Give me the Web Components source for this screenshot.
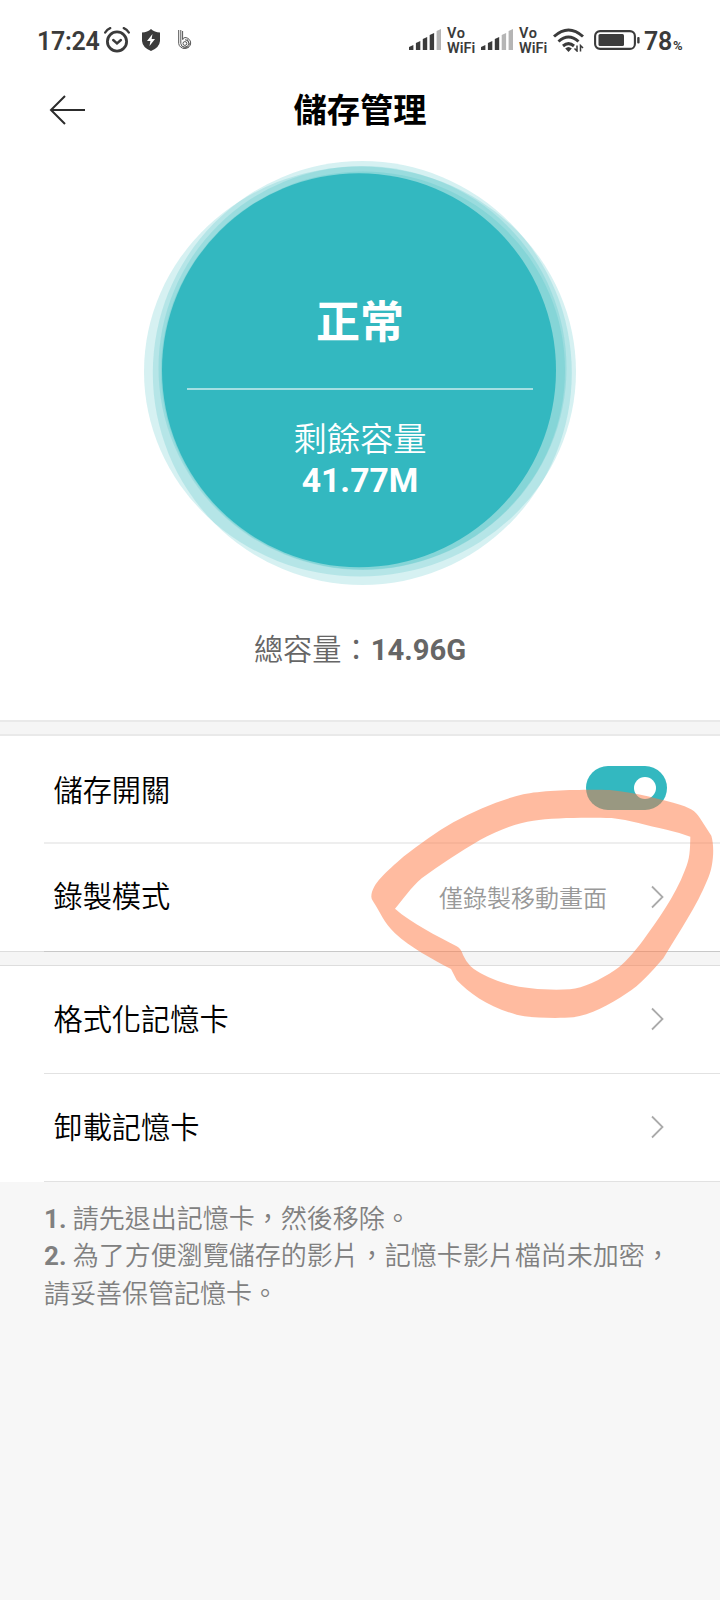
<!DOCTYPE html>
<html lang="zh-Hant">
<head>
<meta charset="utf-8">
<title>儲存管理</title>
<style>
html,body{margin:0;padding:0;background:#f7f7f7}
body{font-family:Roboto,"Noto Sans CJK TC",sans-serif;color:#000}
</style>
</head>
<body>
<storage-page></storage-page>
<script>
const define = (name, html) => customElements.define(name, class extends HTMLElement {
  constructor() {
    super();
    const t = document.createElement('template');
    t.innerHTML = html;
    this.attachShadow({ mode: 'open' }).appendChild(t.content.cloneNode(true));
  }
});

customElements.define('signal-bars', class extends HTMLElement {
  connectedCallback() {
    const level = +this.getAttribute('level');
    const root = this.attachShadow({ mode: 'open' });
    let bars = '';
    for (let i = 0; i < 5; i++) {
      const x = i * 6.9, top = 16 - i * 4;
      bars += `<path d="M${x} ${top + 2}L${x + 4.4} ${top}V21H${x}Z" fill="${i < level ? '#3b3b3b' : '#b5b5b5'}"/>`;
    }
    root.innerHTML = `<style>:host{display:block;width:32px;height:21px}svg{display:block}</style><svg width="32" height="21">${bars}</svg>`;
  }
});

define('vo-wifi', `<style>
:host{display:block;width:30px;font:600 14.500px/15px Roboto,sans-serif;color:#3b3b3b}
div{white-space:nowrap;height:15px}.v{letter-spacing:.6px}
</style><div class="v">Vo</div><div>WiFi</div>`);

define('status-bar', `<style>
:host{display:flex;height:80px;box-sizing:border-box;padding:0 0 0 37px;align-items:flex-start;color:#3b3b3b}
svg{display:block;flex:none}
.time{font:600 25px/30px Roboto,sans-serif;width:67px;margin-top:27px;letter-spacing:-.3px}
.alarm{margin-top:27px}.shield{margin:29px 0 0 11px}.b{margin:30px 0 0 18px}
.s1{margin:29px 0 0 217px}.v1{margin:26px 0 0 6px}
.s2{margin:29px 0 0 4px}.v2{margin:26px 0 0 6px}
.wifi{margin:28px 0 0 4px}.bat{margin:30px 0 0 10px}
.pct{font:600 25px/30px Roboto,sans-serif;margin:27px 0 0 4px;white-space:nowrap;letter-spacing:-.3px}
.pct small{font-size:13px;font-weight:700;margin-left:1px}
</style>
<div class="time">17:24</div>
<svg class="alarm" width="27" height="26" fill="none" stroke="#3b3b3b" stroke-linecap="round"><circle cx="13" cy="14.500" r="9.600" stroke-width="2.800"/><path d="M9.200 13l3.800 3.300 3.900-3.300" stroke-width="2.400"/><path d="M1.200 5.500Q3 2.400 6.200 1.200M24.800 5.500Q23 2.400 19.800 1.200" stroke-width="2.400"/></svg>
<svg class="shield" width="18" height="22"><path d="M9 0Q12.500 3.200 18 3.500V12Q17.500 18.500 9 22Q.5 18.500 0 12V3.500Q5.500 3.200 9 0Z" fill="#3b3b3b"/><path d="M10.500 5L5 12H8.400L7.500 17L13 10H9.600Z" fill="#fff"/></svg>
<svg class="b" width="14" height="20" fill="none" stroke="#555" stroke-width="1"><path d="M.7 0V13.500A6 5.500 0 1 0 7 7.500M2.800 0V13.500A4 3.700 0 1 0 7 9.700M4.600 1V9M7 7.500Q4.600 8 4.600 10"/><circle cx="6.900" cy="13.500" r="1.900"/><path d="M9 9l3 6M5 18l6-1" stroke-width=".8"/></svg>
<signal-bars class="s1" level="4"></signal-bars><vo-wifi class="v1"></vo-wifi>
<signal-bars class="s2" level="3"></signal-bars><vo-wifi class="v2"></vo-wifi>
<svg class="wifi" width="31" height="24" fill="none" stroke="#3b3b3b" stroke-width="3"><path d="M1 8.500Q15.500-4.500 30 8.500M5.500 13.500Q15.500 4.500 25.500 13.500M10 18Q15.500 13.300 21 18"/><path d="M12.200 20.500Q15.500 17.500 18.800 20.500L15.500 24Z" fill="#3b3b3b" stroke="none"/><path d="M24 17.500V23L21.500 20.500M27.500 23.500V17.500L30 20" stroke-width="1.500"/></svg>
<svg class="bat" width="46" height="20"><rect x="1.100" y="1.100" width="39.800" height="17.800" rx="5" fill="none" stroke="#3b3b3b" stroke-width="2.100"/><rect x="4.500" y="4" width="25.500" height="12" rx="1.500" fill="#3b3b3b"/><rect x="43.200" y="7" width="2.400" height="6.500" rx="1" fill="#3b3b3b"/></svg>
<div class="pct">78<small>%</small></div>`);

define('nav-bar', `<style>
:host{display:grid;grid-template-columns:80px 1fr 80px;height:58px;align-items:center;padding:0 20px;box-sizing:border-box}
svg{margin:2px 0 0 29px;display:block}
h1{margin:4px 0 0;text-align:center;font-size:33.300px;line-height:48px;font-weight:700}
</style>
<svg width="37" height="32" fill="none" stroke="#2c2c2c" stroke-width="2"><path d="M36 16H2M16 2L2 16L16 30"/></svg>
<h1><slot></slot></h1>`);

define('capacity-dial', `<style>
:host{display:grid;height:428px;margin-top:21px;color:#fff;text-align:center}
svg{grid-area:1/1;display:block}
.c{grid-area:1/1;display:flex;flex-direction:column;align-items:center;z-index:1}
.state{margin-top:132px;font-size:44px;line-height:64px;font-weight:700}
.rule{margin-top:33px;width:346px;height:2px;background:#a5dfe2}
.label{margin-top:27px;font-size:33.300px;line-height:46px;font-weight:350}
.val{font-size:33.700px;line-height:40px;font-weight:700;margin-top:-2px}
</style>
<svg width="720" height="428" viewBox="0 159 720 428"><g fill="#33b8c0" fill-opacity=".2">
<ellipse cx="360" cy="371.500" rx="216" ry="205"/><ellipse cx="362.300" cy="373" rx="209.500" ry="212"/><ellipse cx="362.500" cy="368" rx="204" ry="202"/><ellipse cx="363" cy="370.500" rx="202" ry="199"/></g>
<circle cx="359" cy="370.300" r="197" fill="#33b8c0"/></svg>
<div class="c"><div class="state"><slot name="state"></slot></div><div class="rule"></div><div class="label"><slot name="label"></slot></div><div class="val"><slot name="value"></slot></div></div>`);

define('total-line', `<style>
:host{display:block;height:133px;box-sizing:border-box;padding-top:42px;text-align:center;font-size:29.200px;line-height:42px;color:#666;font-weight:350}
</style><slot></slot>`);

define('section-gap', `<style>
:host{display:block;height:16px;box-sizing:border-box;background:#f5f5f5;border:solid #e9e9e9;border-width:2px 0}
:host([thin]){height:14px;border-width:0 0 1px;border-color:#ddd}
</style>`);

define('chevron-icon', `<style>:host{display:block;width:13px;height:24px}svg{display:block}</style>
<svg width="13" height="24" fill="none" stroke="#aaa" stroke-width="1.800"><path d="M1 1.500L11.500 12L1 22.500"/></svg>`);

define('toggle-switch', `<style>
:host{display:flex;width:81px;height:44px;border-radius:22px;background:#33b8c0;align-items:center;justify-content:flex-end;box-sizing:border-box;padding-right:10.500px}
i{width:22.500px;height:22.500px;border-radius:50%;background:#fff}
</style><i></i>`);

define('setting-row', `<style>
:host{display:flex;flex-direction:column;height:108px;background:#fff}
.r{flex:1;display:flex;align-items:center;padding:0 56px 2px 53.500px;font-size:29.200px;font-weight:350}
.l{flex:1;padding-bottom:var(--lift,4px)}
::slotted([slot=value]){font-size:24px;color:#999;font-weight:350;margin-right:44px;padding-bottom:1px}
.line{margin-left:44px;height:var(--h,1px);background:var(--line,#e2e2e2)}
</style><div class="r"><div class="l"><slot></slot></div><slot name="value"></slot><slot name="end"></slot></div><div class="line"></div>`);

define('note-text', `<style>
:host{display:block;padding:19px 0 0 44px;font-size:26px;line-height:37.400px;color:#808080;font-weight:350;white-space:nowrap}
</style><slot></slot>`);

define('marker-loop', `<style>:host{position:absolute;left:360px;top:740px;display:block}svg{display:block}</style>
<svg width="360" height="300" viewBox="0 0 1080 900"><path fill="#ff7741" fill-opacity=".5" fill-rule="evenodd" d="M34 470C35 430 80 395 130 350C180 312 230 275 280 247C350 208 420 180 490 163C550 150 680 148 750 150C830 158 910 180 960 194C1000 206 1012 220 1022 238L1054 287C1064 320 1061 380 1042 420C1010 500 960 570 910 655C870 700 840 735 800 760C750 795 690 825 640 832C590 836 510 834 470 824C390 803 330 762 290 720L273 687C220 660 150 622 105 580C70 545 60 515 40 485Q34 478 34 470ZM105 506C130 478 150 445 185 415C240 375 300 335 360 300C410 273 470 248 520 242C580 232 690 232 755 234C810 240 860 257 920 269Q960 278 991 290C990 330 990 355 975 390C945 470 890 545 850 600C820 640 790 675 765 690C720 720 670 744 630 748C560 751 480 747 425 727C390 714 355 700 331 678Q318 665 309 645Q302 624 290 619C230 587 155 550 105 506Z"/></svg>`);

define('storage-page', `<style>
:host{display:block;position:relative;width:720px;height:1600px;background:#f7f7f7;overflow:hidden}
.top{background:#fff}
b{font-weight:700}
.first{--h:2px;--line:#eee;--lift:1px}
.second{height:107px;--h:0px;--lift:5px}
.edge{height:1px;background:#ddd;padding-left:44px}
.edge::after{content:"";display:block;height:1px;background:#c8c8c8}
</style>
<div class="top"><status-bar></status-bar><nav-bar>儲存管理</nav-bar>
<capacity-dial><span slot="state">正常</span><span slot="label">剩餘容量</span><span slot="value">41.77M</span></capacity-dial>
<total-line>總容量：<b>14.96G</b></total-line></div>
<section-gap></section-gap>
<setting-row class="first">儲存開關<toggle-switch slot="end" style="margin-right:-2.500px"></toggle-switch></setting-row>
<setting-row class="second">錄製模式<span slot="value">僅錄製移動畫面</span><chevron-icon slot="end"></chevron-icon></setting-row>
<div class="edge"></div>
<section-gap thin></section-gap>
<setting-row>格式化記憶卡<chevron-icon slot="end"></chevron-icon></setting-row>
<setting-row>卸載記憶卡<chevron-icon slot="end"></chevron-icon></setting-row>
<note-text><b>1.</b> 請先退出記憶卡，然後移除。<br><b>2.</b> 為了方便瀏覽儲存的影片，記憶卡影片檔尚未加密，<br>請妥善保管記憶卡。</note-text>
<marker-loop></marker-loop>`);
</script>
</body>
</html>
